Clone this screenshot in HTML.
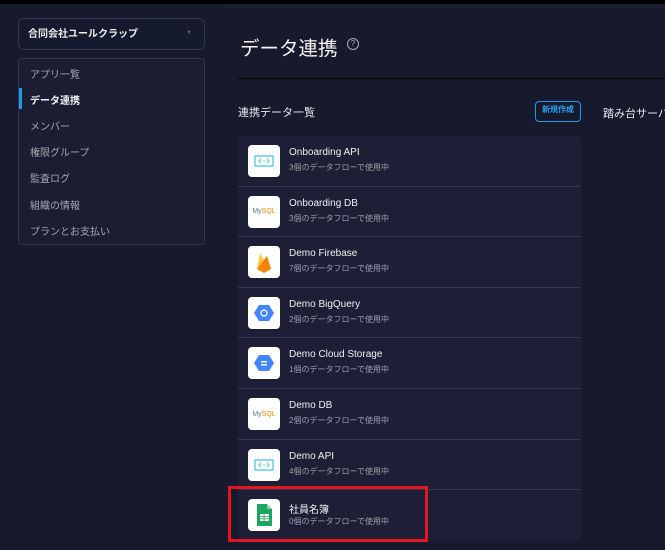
<!DOCTYPE html><html><head><meta charset="utf-8"><style>
*{margin:0;padding:0;box-sizing:border-box}
body{width:665px;height:550px;background:#171a2c;font-family:"Liberation Sans","Noto Sans CJK JP",sans-serif;position:relative;overflow:hidden;color:#e8e9ee}
.a{position:absolute}
.dd{left:18px;top:18px;width:187px;height:32px;border:1px solid #33374d;border-radius:6px;background:#151a2e;font-size:10px;font-weight:bold;padding:6px 9px;color:#eee}
.menu{left:18px;top:58px;width:187px;height:187px;border:1px solid #33374d;border-radius:3px;background:#1b1e33}
.mi{position:absolute;left:11px;font-size:10px;color:#a4a7b5}
.row{position:absolute;left:0;width:343px;height:50.6px;border-bottom:1px solid #34384c}
.ic{position:absolute;left:10px;top:9px;width:32px;height:32px;background:#fff;border-radius:4px;display:flex;align-items:center;justify-content:center}
.t{position:absolute;left:51px;top:11px;font-size:10px;color:#f0f0f4}
.s{position:absolute;left:51px;top:26px;font-size:8px;color:#9da0b0}
</style></head><body>
<div class="a" style="left:0;top:0;width:665px;height:4px;background:#000"></div>
<div class="a" style="left:222px;top:4px;width:443px;height:4px;background:#1d2032"></div>
<div class="a dd">合同会社ユールクラップ<span style="position:absolute;right:12px;top:11px;font-size:6px;color:#666">▼</span></div>
<div class="a menu">
<div class="mi" style="top:7px">アプリ一覧</div>
<div style="position:absolute;left:0;top:29px;width:3px;height:21px;background:#1a9cf0"></div>
<div class="mi" style="top:33px;color:#f2f2f5;font-weight:bold">データ連携</div>
<div class="mi" style="top:59px">メンバー</div>
<div class="mi" style="top:85px">権限グループ</div>
<div class="mi" style="top:111px">監査ログ</div>
<div class="mi" style="top:138px">組織の情報</div>
<div class="mi" style="top:164px">プランとお支払い</div>
</div>
<div class="a" style="left:240px;top:32px;font-size:19.5px;color:#f4f4f6">データ連携</div>
<div class="a" style="left:347px;top:38px;width:12px;height:12px;border:1.3px solid #aaa;border-radius:50%;font-size:8px;color:#aaa;text-align:center;line-height:10px">?</div>
<div class="a" style="left:238px;top:78px;width:427px;height:1px;background:#050608"></div>
<div class="a" style="left:238px;top:104px;font-size:11px;color:#e6e7ec">連携データ一覧</div>
<div class="a" style="left:535px;top:101px;width:46px;height:21px;border:1.5px solid #1a9cf0;border-radius:4px;font-size:8px;font-weight:bold;color:#2aa4f4;text-align:center;line-height:16px">新規作成</div>
<div class="a" style="left:603px;top:105px;font-size:11px;color:#e6e7ec;white-space:nowrap">踏み台サーバー</div>
<div class="a" style="left:238px;top:136px;width:343px;height:405px;background:#1c1f35;border-radius:5px;overflow:hidden">
<div class="row" style="top:0"><div class="ic"><svg width="20" height="12"><rect x="1" y="1" width="18" height="10" fill="none" stroke="#3cc0e0" stroke-width="1.2"/><path d="M7 4l-2 2 2 2M13 4l2 2-2 2" stroke="#3cc0e0" fill="none" stroke-width="0.9"/><path d="M8.5 6h0.8M9.8 6h0.8M11.1 6h0.8" stroke="#3cc0e0"/></svg></div><div class="t">Onboarding API</div><div class="s">3個のデータフローで使用中</div></div>
<div class="row" style="top:50.6px"><div class="ic"><span style="font-size:7px;color:#5b7a99">My<span style="color:#e48e00">SQL</span></span></div><div class="t">Onboarding DB</div><div class="s">3個のデータフローで使用中</div></div>
<div class="row" style="top:101.2px"><div class="ic"><svg width="16" height="22" viewBox="0 0 16 22"><path d="M1 18L4 2l4 7 3-4 4 13-7 4z" fill="#fcca3f"/><path d="M1 18l7 4 7-4-4-13z" fill="#f6820c"/></svg></div><div class="t">Demo Firebase</div><div class="s">7個のデータフローで使用中</div></div>
<div class="row" style="top:151.8px"><div class="ic"><svg width="20" height="20" viewBox="0 0 20 20"><path d="M5 2h10l5 8-5 8H5L0 10z" fill="#4386fa"/><circle cx="10" cy="10" r="3" fill="none" stroke="#fff" stroke-width="1.3"/></svg></div><div class="t">Demo BigQuery</div><div class="s">2個のデータフローで使用中</div></div>
<div class="row" style="top:202.4px"><div class="ic"><svg width="20" height="20" viewBox="0 0 20 20"><path d="M5 2h10l5 8-5 8H5L0 10z" fill="#4386fa"/><rect x="7" y="8" width="6" height="1.5" fill="#fff"/><rect x="7" y="11" width="6" height="1.5" fill="#fff"/></svg></div><div class="t">Demo Cloud Storage</div><div class="s">1個のデータフローで使用中</div></div>
<div class="row" style="top:253px"><div class="ic"><span style="font-size:7px;color:#5b7a99">My<span style="color:#e48e00">SQL</span></span></div><div class="t">Demo DB</div><div class="s">2個のデータフローで使用中</div></div>
<div class="row" style="top:303.6px"><div class="ic"><svg width="20" height="12"><rect x="1" y="1" width="18" height="10" fill="none" stroke="#3cc0e0" stroke-width="1.2"/><path d="M7 4l-2 2 2 2M13 4l2 2-2 2" stroke="#3cc0e0" fill="none" stroke-width="0.9"/><path d="M8.5 6h0.8M9.8 6h0.8M11.1 6h0.8" stroke="#3cc0e0"/></svg></div><div class="t">Demo API</div><div class="s">4個のデータフローで使用中</div></div>
<div class="row" style="top:354.2px;border:none"><div class="ic"><svg width="16" height="22" viewBox="0 0 16 22"><path d="M1 0h10l5 5v17H1z" fill="#1fa463"/><path d="M11 0v5h5z" fill="#8ed1b1"/><rect x="4" y="10" width="9" height="7" fill="#fff"/><path d="M4 12.5h9M4 14.8h9M8 10v7" stroke="#1fa463" stroke-width="0.8"/></svg></div><div class="t">社員名簿</div><div class="s">0個のデータフローで使用中</div></div>
</div>
<div class="a" style="left:228px;top:486px;width:200px;height:56px;border:3px solid #e3151e"></div>
</body></html>
